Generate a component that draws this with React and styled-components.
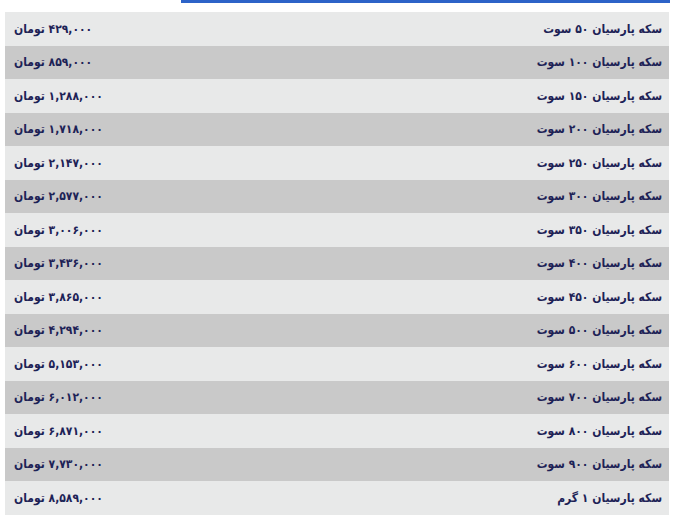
import React from "react";
import styled, { createGlobalStyle } from "styled-components";

const GlobalStyle = createGlobalStyle`
    body {
        margin: 0;
        background: #ffffff;
        font-family: "DejaVu Sans Condensed", "DejaVu Sans", sans-serif;
    }
`;

const S = {};

const rows = [
    ["سکه پارسیان ۵۰ سوت", "۴۲۹,۰۰۰ تومان"],
    ["سکه پارسیان ۱۰۰ سوت", "۸۵۹,۰۰۰ تومان"],
    ["سکه پارسیان ۱۵۰ سوت", "۱,۲۸۸,۰۰۰ تومان"],
    ["سکه پارسیان ۲۰۰ سوت", "۱,۷۱۸,۰۰۰ تومان"],
    ["سکه پارسیان ۲۵۰ سوت", "۲,۱۴۷,۰۰۰ تومان"],
    ["سکه پارسیان ۳۰۰ سوت", "۲,۵۷۷,۰۰۰ تومان"],
    ["سکه پارسیان ۳۵۰ سوت", "۳,۰۰۶,۰۰۰ تومان"],
    ["سکه پارسیان ۴۰۰ سوت", "۳,۴۳۶,۰۰۰ تومان"],
    ["سکه پارسیان ۴۵۰ سوت", "۳,۸۶۵,۰۰۰ تومان"],
    ["سکه پارسیان ۵۰۰ سوت", "۴,۲۹۴,۰۰۰ تومان"],
    ["سکه پارسیان ۶۰۰ سوت", "۵,۱۵۳,۰۰۰ تومان"],
    ["سکه پارسیان ۷۰۰ سوت", "۶,۰۱۲,۰۰۰ تومان"],
    ["سکه پارسیان ۸۰۰ سوت", "۶,۸۷۱,۰۰۰ تومان"],
    ["سکه پارسیان ۹۰۰ سوت", "۷,۷۳۰,۰۰۰ تومان"],
    ["سکه پارسیان ۱ گرم", "۸,۵۸۹,۰۰۰ تومان"],
];

const App = () => (
    <>
        <GlobalStyle />
        <S.Page>
            <S.TopBar />
            <S.Table>
                {rows.map(([name, price], i) => (
                    <S.Row key={name} $dark={i % 2 === 1}>
                        <S.Name>{name}</S.Name>
                        <S.Price>{price}</S.Price>
                    </S.Row>
                ))}
            </S.Table>
        </S.Page>
    </>
);

S.Page = styled.div`
    display: flex;
    flex-direction: column;
    padding: 0 7px 0 5px;
`;

S.TopBar = styled.div`
    height: 3px;
    margin-left: 176px;
    margin-right: -1px;
    background: #2d63c8;
`;

S.Table = styled.div`
    display: flex;
    flex-direction: column;
    margin-top: 9px;
    direction: rtl;
`;

S.Row = styled.div`
    display: flex;
    justify-content: space-between;
    align-items: center;
    height: 33.5px;
    padding: 0 7px 0 9px;
    background: ${(p) => (p.$dark ? "#c9c9c9" : "#e8e9e9")};
    color: #1d2256;
    font-size: 12px;
    font-weight: bold;
`;

S.Name = styled.div``;

S.Price = styled.div`
    letter-spacing: -0.3px;
`;

export default App;
